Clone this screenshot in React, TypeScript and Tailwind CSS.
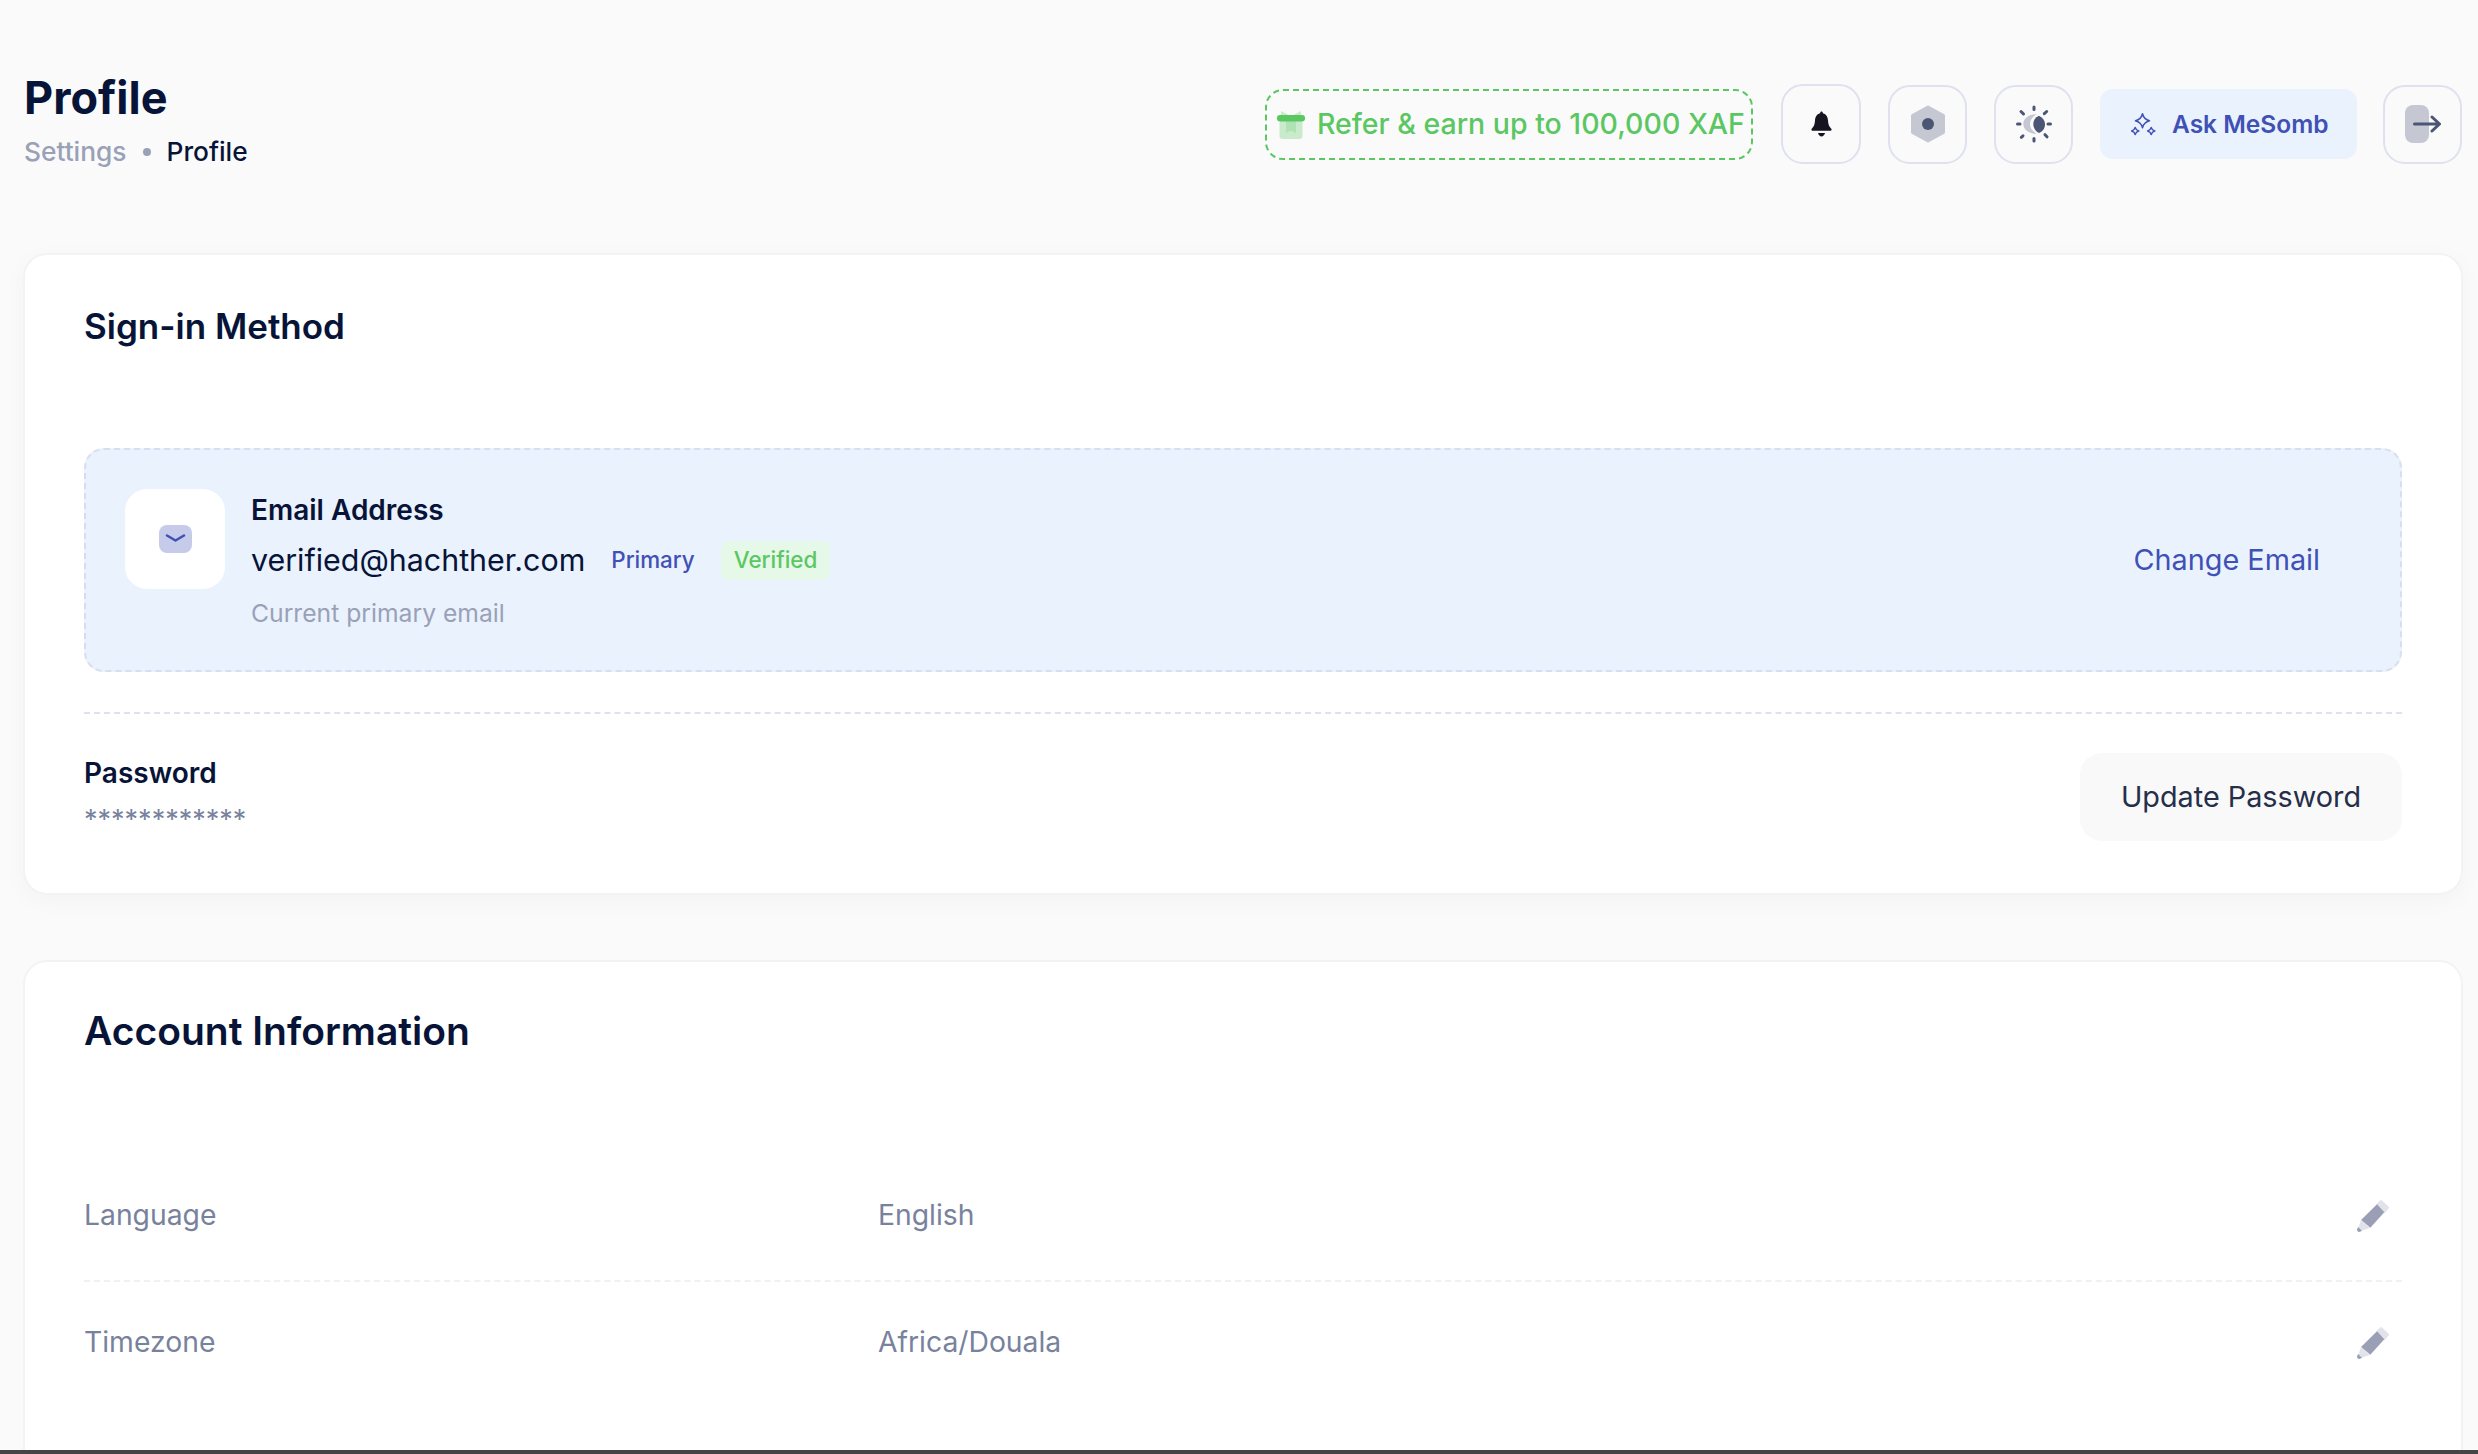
import React from 'react';

function GiftIcon() {
  return (
    <svg width="28" height="29" viewBox="0 0 28 29" className="shrink-0">
      <path d="M4 6 L4 1 L9 3.5 L13 6 Z M24 6 L24 1 L19 3.5 L15 6 Z" fill="#C9EBCC" />
      <rect x="2.5" y="10" width="23" height="19" rx="3" fill="#C9EBCC" />
      <path d="M9 11 H19 V23 L14 20.5 L9 23 Z" fill="#AFE2B4" />
      <rect x="0" y="5" width="28" height="6.5" rx="3" fill="#5BC763" />
    </svg>
  );
}

function BellIcon() {
  return (
    <svg width="21" height="26" viewBox="0 0 21 26">
      <path
        d="M10.5 .5 C11.3 .5 11.8 1.2 11.9 2.2 C15.4 3 16.8 6 17 9.5 C17.2 13 18 15.6 20.3 17.8 C21 18.6 20.6 19.8 19.5 19.8 L1.5 19.8 C.4 19.8 0 18.6 .7 17.8 C3 15.6 3.8 13 4 9.5 C4.2 6 5.6 3 9.1 2.2 C9.2 1.2 9.7 .5 10.5 .5 Z"
        fill="#15141F"
      />
      <path d="M7 22 H14 C13.4 24 12 25.5 10.5 25.5 C9 25.5 7.6 24 7 22 Z" fill="#15141F" />
    </svg>
  );
}

function HexIcon() {
  return (
    <svg width="36" height="38" viewBox="0 0 36 38">
      <path
        d="M18 2 L33.5 10.5 L33.5 27.5 L18 36 L2.5 27.5 L2.5 10.5 Z"
        fill="#C5C8D3"
        stroke="#C5C8D3"
        strokeWidth="3"
        strokeLinejoin="round"
      />
      <circle cx="18" cy="19" r="6" fill="#4B5675" />
    </svg>
  );
}

function SunMoonIcon() {
  return (
    <svg width="36" height="36" viewBox="0 0 36 36" className="overflow-visible">
      <path
        d="M20.7 8.2 C14 8 7.3 12 7.3 18 C7.3 24 14 28 20.7 27.8 C16 25 14 21.5 14 18 C14 14.5 16 11 20.7 8.2 Z"
        fill="#C5C8D3"
      />
      <path
        d="M23 9.7 C27 11.5 29 15 29 18 C29 22 27 25.5 23 27 C19 25 17.3 21.5 17.3 18 C17.3 14.5 19 11.5 23 9.7 Z"
        fill="#4B5675"
      />
      <g stroke="#4B5675" strokeWidth="3" strokeLinecap="round">
        <path d="M18 1 V3.5" />
        <path d="M18 32.5 V35" />
        <path d="M1.5 18 H4" />
        <path d="M32 18 H34.5" />
        <path d="M5 5.5 L7.5 8" />
        <path d="M30.7 5.5 L28.3 7.7" />
        <path d="M5.3 31.3 L7 29.8" />
        <path d="M29 28.7 L31 30.8" />
      </g>
    </svg>
  );
}

function SparkIcon() {
  const star = (cx: number, cy: number, r: number) =>
    `M${cx} ${cy - r} Q${cx + r * 0.2} ${cy - r * 0.2} ${cx + r} ${cy} Q${cx + r * 0.2} ${cy + r * 0.2} ${cx} ${cy + r} Q${cx - r * 0.2} ${cy + r * 0.2} ${cx - r} ${cy} Q${cx - r * 0.2} ${cy - r * 0.2} ${cx} ${cy - r} Z`;
  return (
    <svg width="25" height="23" viewBox="0 0 25 23" className="shrink-0">
      <g fill="none" stroke="#3F51B5" strokeWidth="1.5" strokeLinejoin="round">
        <path d={star(11.5, 7.8, 7)} />
        <path d={star(4.2, 18, 3.6)} />
        <path d={star(20.2, 18, 3.6)} />
      </g>
    </svg>
  );
}

function ExitIcon() {
  return (
    <svg width="36" height="38" viewBox="0 0 36 38">
      <rect x="0" y="0" width="24" height="38" rx="8" fill="#C5C8D3" />
      <path
        d="M9.5 19 H34 M27 12 L34.5 19 L27 26"
        fill="none"
        stroke="#4B5675"
        strokeWidth="3"
        strokeLinecap="round"
        strokeLinejoin="round"
      />
    </svg>
  );
}

function PencilIcon() {
  return (
    <svg width="33" height="33" viewBox="0 0 33 33" className="shrink-0">
      <path
        d="M20.5 5.5 L24 2 L31 8.5 L27.3 13 Z"
        fill="#E1E3EA"
        stroke="#E1E3EA"
        strokeWidth="2"
        strokeLinejoin="round"
      />
      <path d="M4 21 L20 5.3 L27.3 13.3 L13.3 28.7 Z" fill="#9A9FB6" />
      <path d="M4 21 L13.3 28.7 L4 32 L1.3 29 Z" fill="#E1E3EA" />
      <path d="M1 28 L5 31.7 L2.5 33 C0.8 33 0 31.5 0 30.5 Z" fill="#9A9FB6" />
    </svg>
  );
}

function SquareBtn({ children, big }: { children: React.ReactNode; big?: boolean }) {
  return (
    <button
      className={`flex items-center justify-center border-2 border-[#DFE2EE] rounded-[22px] ${big ? 'w-[80px] h-[80px]' : 'w-[79px] h-[79px]'}`}
    >
      {children}
    </button>
  );
}

function InfoRow({ label, value, className }: { label: string; value: string; className: string }) {
  return (
    <div className={`flex items-center text-[28.3px] leading-[36px] text-[#78829D] ${className}`}>
      <div className="w-[794px]">{label}</div>
      <div className="flex-1">{value}</div>
      <div className="mr-[12px]">
        <PencilIcon />
      </div>
    </div>
  );
}

export default function App() {
  return (
    <div
      className="w-full h-[1454px] flex flex-col overflow-hidden bg-[#FAFAFA] text-[#071437]"
      style={{ fontFamily: 'Inter, sans-serif' }}
    >
      <div className="flex-1 overflow-hidden">
        <header className="flex items-start justify-between pt-[74px] pl-[24px] pr-[16px] h-[253px]">
          <div>
            <h1 className="text-[45px] leading-[48px] font-bold">Profile</h1>
            <div className="mt-[12px] flex items-center text-[26.3px] leading-[36px] font-medium">
              <span className="text-[#99A1B7]">Settings</span>
              <span className="mx-[16px] w-[8px] h-[8px] rounded-full bg-[#99A1B7]" />
              <span>Profile</span>
            </div>
          </div>
          <div className="mt-[10px] h-[80px] flex items-center">
            <a className="h-[71px] w-[488px] pl-[10px] flex items-center gap-[12px] border-2 border-dashed border-[#5BC763] rounded-[18px] text-[28.5px] font-medium text-[#5BC763] whitespace-nowrap">
              <GiftIcon />
              Refer &amp; earn up to 100,000 XAF
            </a>
            <div className="ml-[28px]">
              <SquareBtn big>
                <BellIcon />
              </SquareBtn>
            </div>
            <div className="ml-[27px]">
              <SquareBtn>
                <HexIcon />
              </SquareBtn>
            </div>
            <div className="ml-[27px]">
              <SquareBtn>
                <SunMoonIcon />
              </SquareBtn>
            </div>
            <button className="ml-[27px] h-[70px] w-[257px] pl-[31px] flex items-center gap-[16px] rounded-[13px] bg-[#EAF2FE] text-[24.5px] font-semibold text-[#3F51B5] whitespace-nowrap">
              <SparkIcon />
              Ask MeSomb
            </button>
            <div className="ml-[26px]">
              <SquareBtn>
                <ExitIcon />
              </SquareBtn>
            </div>
          </div>
        </header>

        <section className="ml-[23px] mr-[15px] h-[642px] px-[59px] pt-[49px] bg-white border-2 border-[#F3F3F5] rounded-[24px] shadow-[0_6px_24px_rgba(0,0,0,0.03)]">
          <h2 className="text-[35px] leading-[44px] font-semibold">Sign-in Method</h2>
          <div className="mt-[100px] h-[224px] p-[39px] flex items-start bg-[#EAF2FE] border-2 border-dashed border-[#D8DEF0] rounded-[20px]">
            <div className="w-[100px] h-[100px] flex items-center justify-center bg-white rounded-[22px]">
              <svg width="33" height="28" viewBox="0 0 33 28">
                <rect width="33" height="28" rx="8" fill="#C7CBEA" />
                <path
                  d="M8 10.5 L16.5 15.5 L25 10.5"
                  fill="none"
                  stroke="#3F51B5"
                  strokeWidth="2.6"
                  strokeLinecap="round"
                  strokeLinejoin="round"
                />
              </svg>
            </div>
            <div className="ml-[26px] pt-[3px]">
              <div className="text-[28px] leading-[36px] font-semibold">Email Address</div>
              <div className="mt-[12px] h-[40px] flex items-center">
                <span className="text-[30.4px] leading-[40px]">verified@hachther.com</span>
                <span className="ml-[26px] text-[22.4px] font-medium text-[#3F51B5]">Primary</span>
                <span className="ml-[26px] h-[39px] px-[13px] flex items-center rounded-[8px] bg-[#E6F8E8] text-[22.4px] font-medium text-[#5BC763]">
                  Verified
                </span>
              </div>
              <div className="mt-[16px] text-[24.7px] leading-[34px] text-[#99A1B7]">Current primary email</div>
            </div>
            <button className="ml-auto self-center mr-[41px] text-[28.8px] leading-[40px] text-[#3F51B5]">
              Change Email
            </button>
          </div>
          <div className="mt-[40px] border-t-2 border-dashed border-[#DFE2EE]" />
          <div className="mt-[39px] flex items-start justify-between">
            <div className="pt-[2px]">
              <div className="text-[28px] leading-[36px] font-semibold">Password</div>
              <div className="mt-[13px] text-[27px] leading-[32px] text-[#78829D]">************</div>
            </div>
            <button className="h-[88px] w-[322px] bg-[#F9F9F9] rounded-[22px] text-[28.8px] text-[#252F4A]">
              Update Password
            </button>
          </div>
        </section>

        <section className="mt-[65px] ml-[23px] mr-[15px] h-[700px] px-[59px] pt-[47px] bg-white border-2 border-[#F3F3F5] rounded-[24px]">
          <h2 className="text-[39px] leading-[44px] font-semibold">Account Information</h2>
          <div className="mt-[144px]">
            <InfoRow label="Language" value="English" className="pb-[47px] border-b-2 border-dashed border-[#F1F1F4]" />
            <InfoRow label="Timezone" value="Africa/Douala" className="pt-[42px]" />
          </div>
        </section>
      </div>
      <div className="h-[4px] shrink-0 bg-[#454545]" />
    </div>
  );
}
